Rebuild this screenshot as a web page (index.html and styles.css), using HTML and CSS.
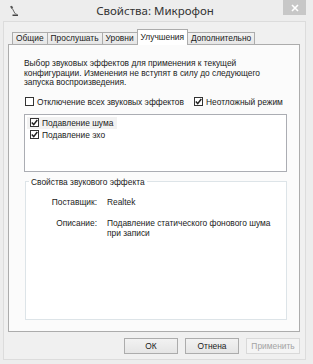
FILE: index.html
```html
<!DOCTYPE html>
<html lang="ru">
<head>
<meta charset="utf-8">
<title>Свойства: Микрофон</title>
<link rel="stylesheet" href="styles.css">
</head>
<body>
<div class="window">
  <div class="titlebar">
    <svg class="app-icon" width="10" height="12" viewBox="0 0 10 12">
      <path d="M1 1.5 L3 0.8 L4.2 3 L2.6 4 Z" fill="#555"/>
      <path d="M3.4 3.6 L6 8.6" stroke="#666" stroke-width="1"/>
      <path d="M3.5 9.5 L9 9.5 L9 11 L3.5 11 Z" fill="#444"/>
      <path d="M6 8.6 L8.4 9.6" stroke="#777" stroke-width="1"/>
    </svg>
    <div class="title">Свойства: Микрофон</div>
    <div class="close">
      <svg width="8" height="8" viewBox="0 0 8 8"><path d="M1 1 L7 7 M7 1 L1 7" stroke="#fff" stroke-width="1.6"/></svg>
    </div>
  </div>
  <div class="client">
    <div class="tabs">
      <div class="tab">Общие</div>
      <div class="tab">Прослушать</div>
      <div class="tab">Уровни</div>
      <div class="tab active">Улучшения</div>
      <div class="tab">Дополнительно</div>
    </div>
    <div class="page">
      <p class="desc">Выбор звуковых эффектов для применения к текущей конфигурации. Изменения не вступят в силу до следующего запуска воспроизведения.</p>
      <div class="opts">
        <div class="chk"><span class="box"></span>Отключение всех звуковых эффектов</div>
        <div class="chk"><span class="box"><svg width="7" height="7" viewBox="0 0 7 7"><path d="M0.8 3.6 L2.7 5.6 L6.3 1" fill="none" stroke="#222" stroke-width="1.5"/></svg></span>Неотложный режим</div>
      </div>
      <div class="list">
        <div class="item sel"><span class="box"><svg width="7" height="7" viewBox="0 0 7 7"><path d="M0.8 3.6 L2.7 5.6 L6.3 1" fill="none" stroke="#222" stroke-width="1.5"/></svg></span>Подавление шума</div>
        <div class="item"><span class="box"><svg width="7" height="7" viewBox="0 0 7 7"><path d="M0.8 3.6 L2.7 5.6 L6.3 1" fill="none" stroke="#222" stroke-width="1.5"/></svg></span>Подавление эхо</div>
      </div>
      <fieldset class="group">
        <legend>Свойства звукового эффекта</legend>
        <div class="props">
          <span class="k">Поставщик:</span><span class="v">Realtek</span>
          <span class="k">Описание:</span><span class="v">Подавление статического фонового шума при записи</span>
        </div>
      </fieldset>
    </div>
    <div class="buttons">
      <button class="btn">ОК</button>
      <button class="btn">Отнена</button>
      <button class="btn" disabled>Применить</button>
    </div>
  </div>
</div>
</body>
</html>
```

FILE: styles.css
```css
* { box-sizing: border-box; }
html, body { margin: 0; padding: 0; }
body {
  background: #ededed;
  font-family: "Liberation Sans", Arial, sans-serif;
  font-size: 8.4px;
  color: #1a1a1a;
  width: 313px;
  height: 364px;
  overflow: hidden;
}
.window { width: 313px; height: 364px; }
.titlebar {
  height: 21px;
  display: flex;
  align-items: flex-start;
  position: relative;
}
.app-icon { margin: 5px 0 0 9px; }
.title {
  flex: 1;
  text-align: center;
  font-family: "Noto Sans", "Open Sans", sans-serif;
  font-size: 11.5px;
  color: #333;
  padding-top: 3px;
  padding-left: 8px;
  line-height: 16px;
}
.close {
  width: 23px;
  height: 15px;
  margin-right: 7px;
  background: #c7c7c7;
  display: flex;
  align-items: center;
  justify-content: center;
}
.close svg { display: block; }
.client {
  margin-left: 3px;
  width: 303px;
  height: 339px;
  border: 1px solid #dcdcdc;
  background: #f0f0f0;
  padding: 7px 5px 0 4px;
}
.tabs {
  display: flex;
  align-items: flex-end;
  height: 15px;
  padding-left: 4px;
  position: relative;
  z-index: 1;
}
.tab {
  height: 12px;
  line-height: 10px;
  padding: 0 3px;
  border: 1px solid #acacac;
  border-bottom: none;
  background: linear-gradient(#f2f2f2, #e6e6e6);
  margin-right: -1px;
  white-space: nowrap;
}
.tab.active {
  height: 16px;
  margin-bottom: -1px;
  background: #fff;
  padding-top: 2px;
  position: relative;
  z-index: 2;
}
.page {
  height: 288px;
  border: 1px solid #acacac;
  background: #fbfbfb;
  padding: 14px 12px 11px 15px;
  display: flex;
  flex-direction: column;
}
.desc {
  margin: 0;
  line-height: 9.5px;
  width: 240px;
}
.opts {
  display: flex;
  margin-top: 9px;
  gap: 9px;
}
.chk, .item {
  display: flex;
  align-items: center;
  white-space: nowrap;
  line-height: 10px;
}
.box {
  width: 9px;
  height: 9px;
  border: 1px solid #333;
  background: #fff;
  margin-right: 3px;
  display: inline-flex;
  align-items: center;
  justify-content: center;
  flex: none;
}
.chk .box { margin-left: 1px; }
.box svg { display: block; }
.list {
  margin-top: 7px;
  height: 58px;
  border: 1px solid #abadb3;
  background: #fff;
  padding: 2px 0 0 2px;
}
.item {
  height: 12px;
  padding-left: 3px;
  width: 90px;
}
.item.sel { background: #f2f2f2; }
.group {
  margin: 5px 0 0 1px;
  flex: 1;
  border: 1px solid #dde4e8;
  background: #fff;
  padding: 0 0 0 3px;
  min-width: 0;
}
.group legend {
  padding: 0 2px;
  line-height: 10px;
}
.props {
  display: grid;
  grid-template-columns: 68px 1fr;
  column-gap: 10px;
  row-gap: 11px;
  padding-top: 10px;
  line-height: 10px;
}
.k { text-align: right; }
.v { width: 165px; }
.buttons {
  display: flex;
  justify-content: flex-end;
  gap: 7px;
  margin-top: 6px;
}
.btn {
  width: 54px;
  height: 16px;
  padding: 0;
  font-family: inherit;
  font-size: 8.4px;
  color: #1a1a1a;
  border: 1px solid #acacac;
  background: linear-gradient(#f2f2f2, #e5e5e5);
  border-radius: 0;
}
.btn:disabled {
  border-color: #d9d9d9;
  background: #f4f4f4;
  color: #a3a3a3;
}
```
